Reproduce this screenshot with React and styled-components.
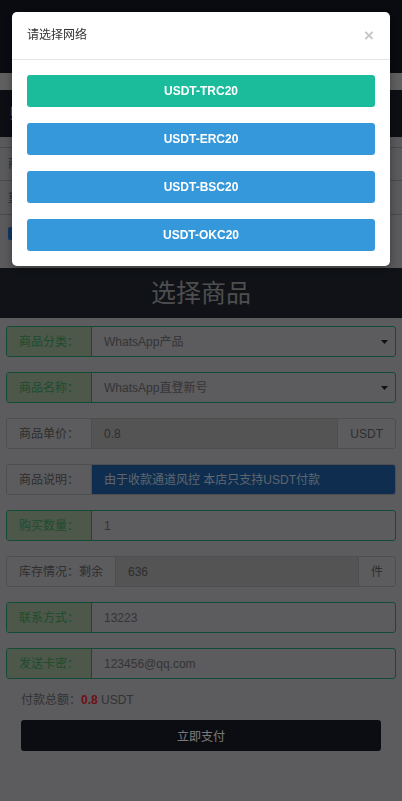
import React from "react";
import styled, { createGlobalStyle, css } from "styled-components";

const FONT = `"Liberation Sans", Arial, "Noto Sans CJK SC", sans-serif`;

const Global = createGlobalStyle`
  html, body { margin: 0; padding: 0; }
  body { background: #b8b6bc; font-family: ${FONT}; }
  * { box-sizing: border-box; }
`;

/* ---------- page behind the dialog ---------- */
const Page = styled.div`
  min-height: 801px;
  display: flex;
  flex-direction: column;
`;

const TopBar = styled.header`
  height: 73px;
  background: #141622;
`;

const Strip = styled.div`
  height: 17px;
  background: #bebebe;
`;

const NoticeHead = styled.div`
  height: 47px;
  background: #191c28;
  color: #d8d8d8;
  font-size: 14px;
  line-height: 47px;
  padding: 0 10px;
`;

const NoticeBody = styled.div`
  height: 131px;
  background: #b4b4b8;
  padding-top: 10px;
  display: flex;
  flex-direction: column;
`;

const NoticeRow = styled.div`
  height: ${(p) => p.$h}px;
  border-top: 1px solid #949498;
  display: flex;
  align-items: ${(p) => (p.$top ? "flex-start" : "center")};
  padding: ${(p) => (p.$top ? "12px 8px 0" : "0 8px")};
  gap: 6px;
  font-size: 12px;
  line-height: 14px;
  color: #555;
`;

const CheckBox = styled.span`
  width: 13px;
  height: 13px;
  border-radius: 2px;
  background: #2470c8;
  flex: none;
`;

const Banner = styled.div`
  height: 50px;
  background: #20252f;
  color: #9a9d9b;
  font-size: 25px;
  line-height: 50px;
  text-align: center;
`;

const Form = styled.div`
  padding: 8px 6px 0;
  display: flex;
  flex-direction: column;
`;

const Rows = styled.div`
  display: flex;
  flex-direction: column;
  gap: 15px;
`;

const GREEN_BORDER = "#25996e";

const tones = {
  success: css`
    border-color: ${GREEN_BORDER};
  `,
  plain: css`
    border-color: #9c9ca0;
  `,
};

const Group = styled.div`
  display: flex;
  height: 31px;
  border: 1px solid;
  border-radius: 3px;
  overflow: hidden;
  ${(p) => tones[p.$tone]}
`;

const Addon = styled.div`
  flex: none;
  display: flex;
  align-items: center;
  padding: 0 12px;
  font-size: 12px;
  line-height: 14px;
  white-space: nowrap;
  ${(p) =>
    p.$tone === "success"
      ? css`
          background: #9aae94;
          color: #3c9a5a;
          border-right: 1px solid ${GREEN_BORDER};
        `
      : css`
          background: #b8b8bc;
          color: #5c5c5c;
          ${p.$end
            ? "border-left: 1px solid #9c9ca0;"
            : "border-right: 1px solid #9c9ca0;"}
        `}
`;

const fieldKinds = {
  normal: css`
    background: transparent;
    color: #6a6a6a;
  `,
  readonly: css`
    background: #a8a8a8;
    color: #5a5a5a;
  `,
  info: css`
    background: #1f5c9e;
    color: #bccbdc;
  `,
};

const Field = styled.div`
  flex: 1;
  min-width: 0;
  display: flex;
  align-items: center;
  justify-content: space-between;
  padding: 0 ${(p) => (p.$select ? 7 : 12)}px 0 12px;
  font-size: 12px;
  line-height: 14px;
  white-space: nowrap;
  ${(p) => fieldKinds[p.$kind || "normal"]}
`;

const Caret = () => (
  <svg width="7" height="4" viewBox="0 0 7 4" aria-hidden="true">
    <path d="M0 0h7L3.5 4z" fill="#222" />
  </svg>
);

const Total = styled.div`
  margin-top: 13px;
  padding: 0 15px;
  font-size: 12px;
  line-height: 17px;
  color: #666;
`;

const Amount = styled.b`
  color: #d8262f;
`;

const PayButton = styled.button`
  margin: 11px 15px 0;
  height: 31px;
  border: 0;
  border-radius: 3px;
  background: #181a24;
  color: #f2f2f2;
  font-family: ${FONT};
  font-size: 12px;
`;

/* ---------- dialog ---------- */
const Backdrop = styled.div`
  position: fixed;
  top: 0;
  right: 0;
  bottom: 0;
  left: 0;
  background: rgba(0, 0, 0, 0.5);
  z-index: 10;
`;

const Dialog = styled.div`
  position: fixed;
  top: 12px;
  left: 12px;
  right: 12px;
  z-index: 11;
  background: #fff;
  border-radius: 5px;
  box-shadow: 0 3px 9px rgba(0, 0, 0, 0.35);
`;

const DialogHead = styled.div`
  display: flex;
  align-items: center;
  justify-content: space-between;
  padding: 15px;
  height: 48px;
  border-bottom: 1px solid #e5e5e5;
`;

const DialogTitle = styled.div`
  font-size: 12px;
  line-height: 17px;
  color: #333;
`;

const Close = styled.button`
  border: 0;
  background: none;
  padding: 0 1px 0 0;
  font-family: ${FONT};
  font-size: 17px;
  font-weight: bold;
  line-height: 17px;
  color: #c6c6c6;
`;

const DialogBody = styled.div`
  padding: 15px;
  display: flex;
  flex-direction: column;
  gap: 16px;
`;

const NetButton = styled.button`
  height: 32px;
  border: 0;
  border-radius: 3px;
  background: ${(p) => (p.$primary ? "#1abc9c" : "#3498db")};
  color: #fff;
  font-family: ${FONT};
  font-size: 12px;
  font-weight: bold;
`;

const rows = [
  { label: "商品分类：", value: "WhatsApp产品", tone: "success", select: true },
  { label: "商品名称：", value: "WhatsApp直登新号", tone: "success", select: true },
  { label: "商品单价：", value: "0.8", tone: "plain", kind: "readonly", unit: "USDT" },
  { label: "商品说明：", value: "由于收款通道风控 本店只支持USDT付款", tone: "plain", kind: "info" },
  { label: "购买数量：", value: "1", tone: "success" },
  { label: "库存情况：剩余", value: "636", tone: "plain", kind: "readonly", unit: "件" },
  { label: "联系方式：", value: "13223", tone: "success" },
  { label: "发送卡密：", value: "123456@qq.com", tone: "success" },
];

export default function App() {
  return (
    <>
      <Global />
      <Page>
        <TopBar />
        <Strip />
        <NoticeHead>购买须知</NoticeHead>
        <NoticeBody>
          <NoticeRow $h={33}>商品为自动发货，付款后请留意联系方式</NoticeRow>
          <NoticeRow $h={34}>重要提示：请核对网络后再付款</NoticeRow>
          <NoticeRow $h={54} $top>
            <CheckBox />
            我已阅读并同意购买须知
          </NoticeRow>
        </NoticeBody>
        <Banner>选择商品</Banner>
        <Form>
          <Rows>
            {rows.map((r) => (
              <Group key={r.label} $tone={r.tone}>
                <Addon $tone={r.tone}>{r.label}</Addon>
                <Field $kind={r.kind} $select={r.select}>
                  <span>{r.value}</span>
                  {r.select && <Caret />}
                </Field>
                {r.unit && (
                  <Addon $tone="plain" $end>
                    {r.unit}
                  </Addon>
                )}
              </Group>
            ))}
          </Rows>
          <Total>
            付款总额：<Amount>0.8</Amount> USDT
          </Total>
          <PayButton>立即支付</PayButton>
        </Form>
      </Page>

      <Backdrop />
      <Dialog role="dialog">
        <DialogHead>
          <DialogTitle>请选择网络</DialogTitle>
          <Close aria-label="close">×</Close>
        </DialogHead>
        <DialogBody>
          <NetButton $primary>USDT-TRC20</NetButton>
          <NetButton>USDT-ERC20</NetButton>
          <NetButton>USDT-BSC20</NetButton>
          <NetButton>USDT-OKC20</NetButton>
        </DialogBody>
      </Dialog>
    </>
  );
}
